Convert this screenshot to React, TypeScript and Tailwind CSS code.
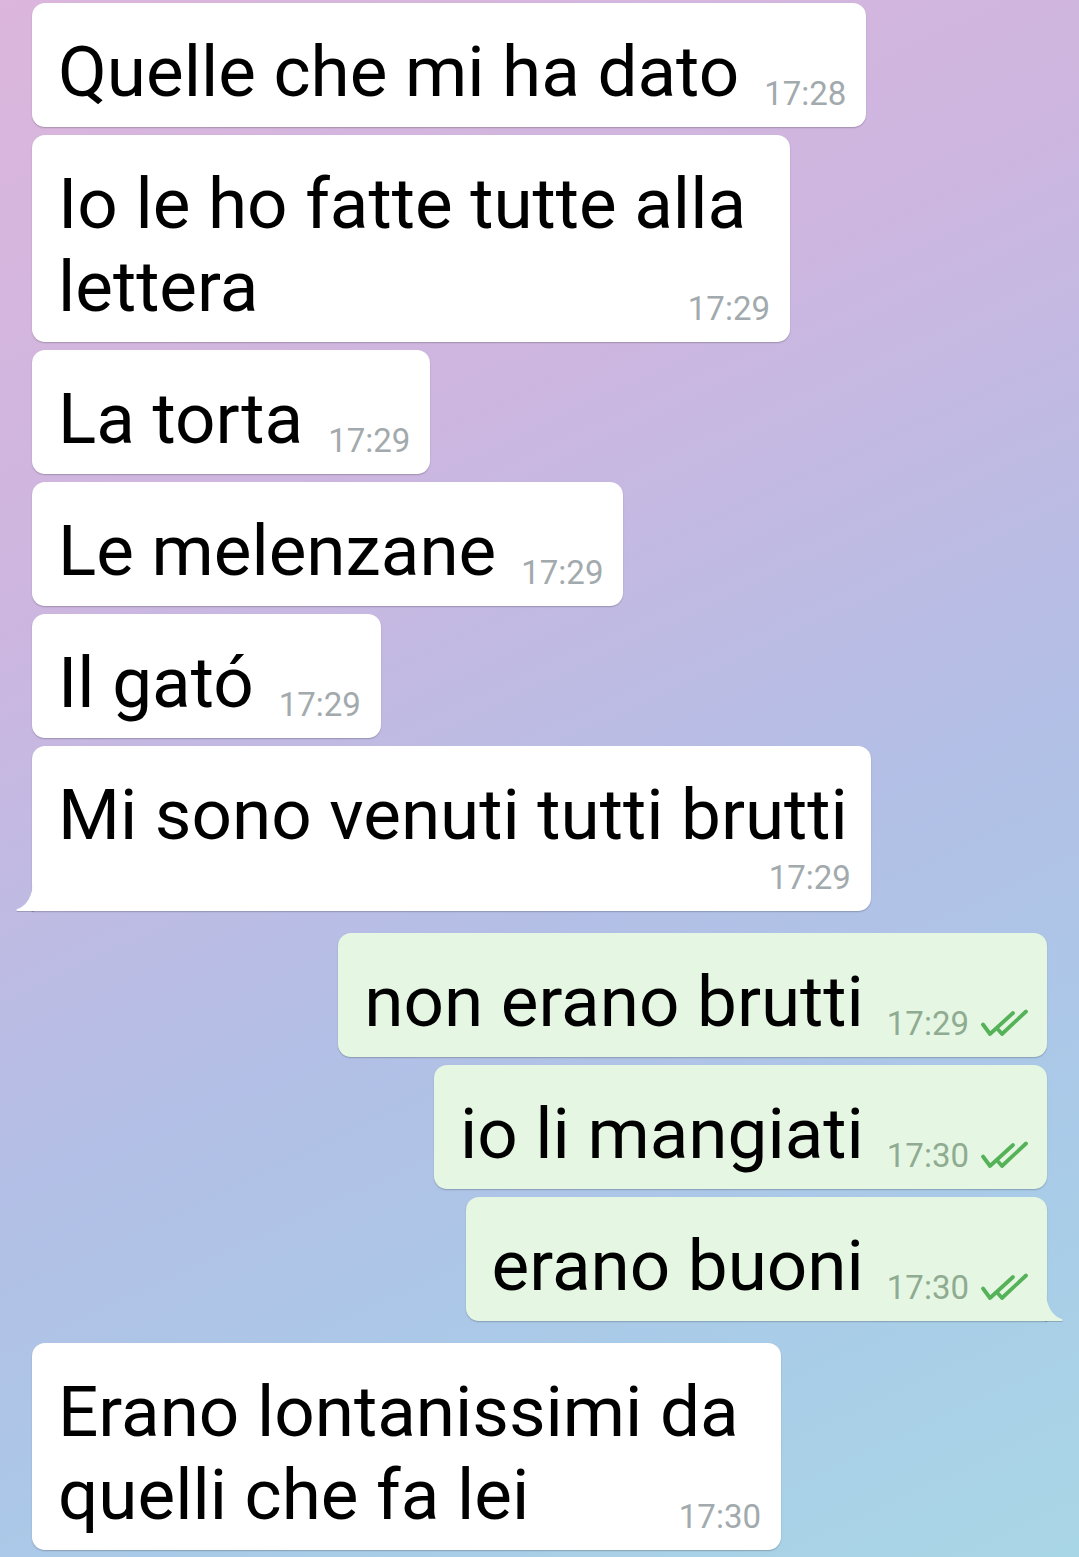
import React from "react";

const font = { fontFamily: "Roboto, 'Noto Sans', sans-serif" } as React.CSSProperties;

function Checks() {
  return (
    <svg width="50" height="30" viewBox="0 0 50 30" className="mb-[5px] ml-[10px]" fill="none">
      <path d="M4 16.5 L11 26 L34 5" stroke="#55b259" strokeWidth="3.8" strokeLinecap="round" strokeLinejoin="round" />
      <path d="M19.5 22 L23 26 L47 3.5" stroke="#55b259" strokeWidth="3.8" strokeLinecap="round" strokeLinejoin="round" />
    </svg>
  );
}

function InTail() {
  return (
    <svg width="18" height="30" viewBox="0 0 18 30" className="absolute left-[-16px] bottom-0" style={{ filter: "drop-shadow(0 1px 0.5px rgba(0,0,0,0.18))" }}>
      <path d="M17 0 C17 14 11 25 1.5 28 C0 28.5 0 30 1.5 30 L18 30 L18 0 Z" fill="#ffffff" />
    </svg>
  );
}

function OutTail() {
  return (
    <svg width="18" height="30" viewBox="0 0 18 30" className="absolute right-[-16px] bottom-0" style={{ filter: "drop-shadow(0 1px 0.5px rgba(0,0,0,0.18))" }}>
      <path d="M1 0 C1 14 7 25 16.5 28 C18 28.5 18 30 16.5 30 L0 30 L0 0 Z" fill="#e5f7e3" />
    </svg>
  );
}

type InProps = { lines: string[]; time: string; width?: string; tail?: boolean; timeBelow?: boolean };

function InBubble({ lines, time, width, tail, timeBelow }: InProps) {
  const last = lines[lines.length - 1];
  const first = lines.slice(0, -1);
  return (
    <div
      className={`relative ml-[32px] bg-white rounded-[13px] shadow-[0_1px_1.5px_rgba(0,0,0,0.22)] pt-[27px] pb-[14px] pl-[26px] ${
        tail ? "rounded-bl-none" : ""
      } ${width ?? "w-fit"} ${timeBelow ? "pr-[23px]" : "pr-[20px]"}`}
    >
      {first.map((l) => (
        <div key={l} className="text-[71px] leading-[83px] text-[#000] whitespace-nowrap">
          {l}
        </div>
      ))}
      {timeBelow ? (
        <>
          <div className="text-[71px] leading-[83px] text-[#000] whitespace-nowrap">{last}</div>
          <div className="flex justify-end -mr-[3px] mt-[3px]">
            <span className="text-[33px] leading-[38px] text-[#a2aaad]">{time}</span>
          </div>
        </>
      ) : (
        <div className="flex items-end justify-between">
          <span className="text-[71px] leading-[83px] text-[#000] whitespace-nowrap">{last}</span>
          <span className="ml-[25px] text-[33px] leading-[38px] text-[#a2aaad] whitespace-nowrap">{time}</span>
        </div>
      )}
      {tail && <InTail />}
    </div>
  );
}

function OutBubble({ text, time, tail }: { text: string; time: string; tail?: boolean }) {
  return (
    <div
      className={`relative self-end mr-[32px] w-fit bg-[#e5f7e3] rounded-[13px] shadow-[0_1px_1.5px_rgba(0,0,0,0.22)] pt-[27px] pb-[14px] pl-[26px] pr-[18px] ${
        tail ? "rounded-br-none" : ""
      }`}
    >
      <div className="flex items-end">
        <span className="text-[71px] leading-[83px] text-[#000] whitespace-nowrap">{text}</span>
        <span className="ml-[23px] text-[33px] leading-[38px] text-[#8fab91] whitespace-nowrap">{time}</span>
        <Checks />
      </div>
      {tail && <OutTail />}
    </div>
  );
}

export default function App() {
  return (
    <div
      className="w-full h-[1557px] overflow-hidden bg-[linear-gradient(155deg,#dcb6dc_0%,#cdb6e0_30%,#b3bfe6_58%,#a9cbe8_80%,#a9d6e6_100%)]"
      style={font}
    >
      <div className="flex flex-col pt-[3px]">
        <div className="flex flex-col gap-[8px]">
          <InBubble lines={["Quelle che mi ha dato"]} time="17:28" />
          <InBubble lines={["Io le ho fatte tutte alla", "lettera"]} time="17:29" width="w-[758px]" />
          <InBubble lines={["La torta"]} time="17:29" />
          <InBubble lines={["Le melenzane"]} time="17:29" />
          <InBubble lines={["Il gató"]} time="17:29" />
          <InBubble lines={["Mi sono venuti tutti brutti"]} time="17:29" tail timeBelow />
        </div>
        <div className="flex flex-col gap-[8px] mt-[22px]">
          <OutBubble text="non erano brutti" time="17:29" />
          <OutBubble text="io li mangiati" time="17:30" />
          <OutBubble text="erano buoni" time="17:30" tail />
        </div>
        <div className="flex flex-col mt-[22px]">
          <InBubble lines={["Erano lontanissimi da", "quelli che fa lei"]} time="17:30" width="w-[749px]" />
        </div>
      </div>
    </div>
  );
}
